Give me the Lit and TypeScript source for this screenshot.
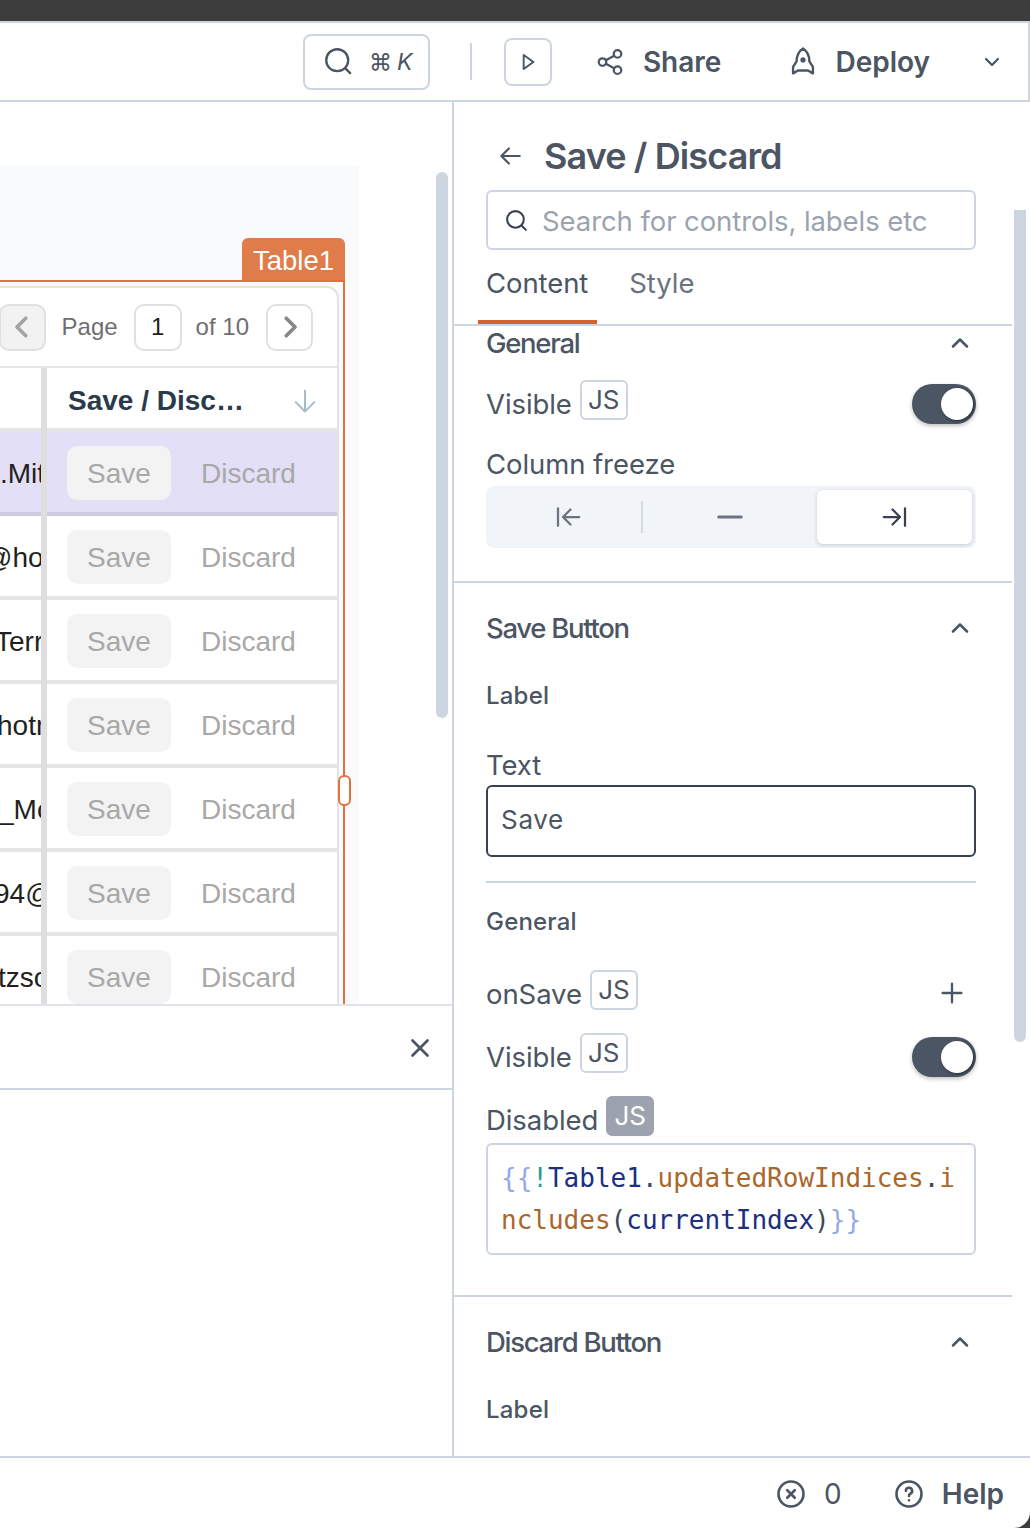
import { LitElement, html, css, svg } from "lit";
import { customElement } from "lit/decorators.js";

const icon = (size: number, body: unknown, sw = 2) => html`<svg
  width=${size}
  height=${size}
  viewBox="0 0 24 24"
  fill="none"
  stroke="currentColor"
  stroke-width=${sw}
  stroke-linecap="round"
  stroke-linejoin="round"
>${body}</svg>`;

// first column is cut by the scroll position, so each row has its own offset
const rows = [
  { text: ".Mitchell", left: 0, on: true },
  { text: "@hotmail", left: -16 },
  { text: "Terry", left: -5 },
  { text: "hotmail", left: -3 },
  { text: "_Morar", left: -2 },
  { text: "94@gmail", left: -6 },
  { text: "tzsche", left: -2 },
];

@customElement("app-root")
export class AppRoot extends LitElement {
  static styles = css`
    :host {
      display: block;
      width: 1030px;
      height: 1528px;
      overflow: hidden;
      background: #3d3d3d;
      font-family: Inter, "Liberation Sans", sans-serif;
      color: #4b5563;
      --line: #cdd5e1;
    }
    .window {
      margin-top: 21px;
      height: 1507px;
      display: flex;
      flex-direction: column;
      background: #fff;
      border-top: 2px solid var(--line);
      border-bottom-right-radius: 16px;
      box-sizing: border-box;
      overflow: hidden;
    }

    /* top bar */
    .top {
      height: 79px;
      flex: none;
      box-sizing: border-box;
      border-bottom: 2px solid var(--line);
      border-right: 2px solid var(--line);
      display: flex;
      align-items: center;
      justify-content: flex-end;
      padding-right: 24px;
    }
    .cmdk {
      width: 127px;
      height: 56px;
      box-sizing: border-box;
      border: 2px solid var(--line);
      border-radius: 8px;
      display: flex;
      align-items: center;
      padding-left: 18px;
      margin-right: 40px;
    }
    .cmdk span {
      font-size: 23px;
      margin-left: 15px;
      white-space: nowrap;
      color: #4b5563;
    }
    .cmdk em {
      margin-left: 5px;
    }
    .vsep {
      width: 2px;
      height: 37px;
      background: var(--line);
      margin-right: 32px;
    }
    .play {
      width: 48px;
      height: 48px;
      box-sizing: border-box;
      border: 2px solid var(--line);
      border-radius: 8px;
      display: flex;
      align-items: center;
      justify-content: center;
      margin-right: 43px;
    }
    .act {
      display: flex;
      align-items: center;
      font-size: 28px;
      font-weight: 600;
      line-height: 34px;
    }
    .act svg {
      margin-right: 15px;
    }
    .share {
      margin-right: 65px;
    }
    .share svg {
      margin-right: 18px;
    }
    .deploy {
      margin-right: 50px;
    }

    /* body */
    .main {
      flex: 1;
      min-height: 0;
      display: flex;
    }
    .left {
      width: 454px;
      flex: none;
      box-sizing: border-box;
      border-right: 2px solid var(--line);
      display: flex;
      flex-direction: column;
    }
    .stage {
      height: 904px;
      flex: none;
      box-sizing: border-box;
      padding-top: 64px;
      border-bottom: 2px solid #e0e4ea;
      position: relative;
      overflow: hidden;
    }
    .scroll {
      position: absolute;
      left: 436px;
      top: 70px;
      width: 12px;
      height: 546px;
      border-radius: 6px;
      background: var(--line);
    }
    .canvas {
      width: 359px;
      height: 100%;
      background: #f9fafb;
      padding-top: 72px;
      box-sizing: border-box;
      display: flex;
      flex-direction: column;
      align-items: flex-end;
    }
    .tag {
      width: 103px;
      height: 42px;
      margin-right: 14px;
      flex: none;
      background: #e07b4a;
      border-radius: 6px 6px 0 0;
      color: #fff;
      font-family: "Liberation Sans", sans-serif;
      font-size: 27.5px;
      line-height: 45px;
      text-align: center;
    }
    .widget {
      width: 345px;
      margin-right: 14px;
      flex: 1;
      box-sizing: border-box;
      border-top: 2px solid #e5703c;
      border-right: 2px solid #e5703c;
      padding: 4px 4px 0 0;
      font-family: "Liberation Sans", sans-serif;
      position: relative;
    }
    .handle {
      position: absolute;
      right: -8px;
      top: 493px;
      width: 13px;
      height: 31px;
      box-sizing: border-box;
      border: 2px solid #e5703c;
      border-radius: 6px;
      background: #fff;
    }
    .table {
      height: 100%;
      box-sizing: border-box;
      background: #fff;
      border-top: 2px solid #e3e3e3;
      border-right: 2px solid #e3e3e3;
      border-top-right-radius: 12px;
      overflow: hidden;
    }
    .pager {
      height: 80px;
      box-sizing: border-box;
      border-bottom: 2px solid #e7e7e7;
      display: flex;
      align-items: center;
      justify-content: flex-end;
      padding-right: 24px;
      font-size: 24px;
      color: #716e6e;
      white-space: nowrap;
    }
    .pg {
      width: 47px;
      height: 47px;
      flex: none;
      box-sizing: border-box;
      border: 2px solid #e0e0e0;
      border-radius: 10px;
      display: flex;
      align-items: center;
      justify-content: center;
      color: #8a8787;
    }
    .pg.prev {
      background: #f2f2f2;
      margin-right: 16px;
      color: #a5a3a3;
    }
    .pg.num {
      width: 48px;
      color: #231f20;
      margin: 0 14px 0 16px;
    }
    .pg.next {
      margin-left: 17px;
    }
    .row {
      display: flex;
      height: 84px;
      box-sizing: border-box;
      border-bottom: 4px solid #e5e5e5;
    }
    .row.on {
      background: #e3dff6;
      border-bottom-color: #cfcbe0;
    }
    .row.head {
      height: 64px;
    }
    .clip {
      width: 41px;
      flex: none;
      overflow: hidden;
      white-space: nowrap;
      font-size: 28px;
      line-height: 84px;
      color: #231f20;
    }
    .colsep {
      width: 6px;
      flex: none;
      margin-bottom: -4px;
      background: #dfdede;
    }
    .cell {
      flex: 1;
      display: flex;
      align-items: flex-start;
      padding: 14px 0 0 20px;
      font-size: 28px;
      color: #a9a8a8;
    }
    .head .cell {
      align-items: center;
      padding: 6px 18px 0 21px;
      justify-content: space-between;
      font-weight: 700;
      color: #2b3a4a;
      font-size: 28px;
    }
    .head .cell svg {
      color: #a9bac9;
    }
    .btn {
      width: 104px;
      height: 54px;
      flex: none;
      border-radius: 10px;
      background: #f3f3f3;
      text-align: center;
      line-height: 55px;
      margin-right: 30px;
    }
    .link {
      line-height: 55px;
    }
    .bar {
      height: 84px;
      flex: none;
      box-sizing: border-box;
      border-bottom: 2px solid var(--line);
      display: flex;
      align-items: center;
      justify-content: flex-end;
      padding-right: 17px;
      padding-top: 2px;
    }

    /* property pane */
    .pane {
      flex: 1;
      min-width: 0;
      position: relative;
      overflow: hidden;
      font-size: 27.5px;
      letter-spacing: -0.08px;
      line-height: 34px;
    }
    .pbar {
      position: absolute;
      left: 560px;
      top: 108px;
      width: 12px;
      height: 832px;
      border-radius: 0 0 6px 6px;
      background: var(--line);
    }
    .title {
      display: flex;
      align-items: center;
      height: 44px;
      margin: 32px 0 12px 43px;
      font-size: 36px;
      font-weight: 600;
      letter-spacing: -0.9px;
    }
    .title svg {
      margin-right: 21px;
    }
    .search {
      height: 60px;
      margin: 0 54px 0 32px;
      box-sizing: border-box;
      border: 2px solid var(--line);
      border-radius: 6px;
      display: flex;
      align-items: center;
      padding: 1px 0 0 16px;
      color: #9ca3af;
    }
    .search svg {
      color: #374151;
      margin-right: 13px;
    }
    .tabs {
      height: 76px;
      margin-right: 18px;
      box-sizing: border-box;
      border-bottom: 2px solid var(--line);
      display: flex;
      padding-left: 24px;
    }
    .tab {
      padding: 16px 9px 0 8px;
      margin-right: 24px;
      height: 74px;
      box-sizing: border-box;
      color: #6b7280;
    }
    .tab.on {
      border-bottom: 4px solid #d4622f;
      color: #4b5563;
    }
    .sec {
      display: flow-root;
      margin: 0 18px 0 0;
      padding: 0 36px 0 32px;
      border-bottom: 2px solid var(--line);
    }
    .sec.last {
      border-bottom: 0;
    }
    .sec-h {
      display: flex;
      align-items: center;
      justify-content: space-between;
      font-weight: 500;
      letter-spacing: -1.3px;
    }
    .sec-h svg {
      margin-right: 2px;
    }
    .sub {
      font-size: 24px;
      font-weight: 500;
      letter-spacing: 0.2px;
    }
    .field {
      display: flex;
      align-items: flex-end;
      justify-content: space-between;
      height: 44px;
    }
    .name {
      display: flex;
      align-items: flex-end;
      margin-bottom: 3px;
    }
    .js {
      width: 48px;
      height: 40px;
      box-sizing: border-box;
      border: 2px solid var(--line);
      border-radius: 6px;
      margin: 0 0 1px 8px;
      font-size: 26px;
      line-height: 36px;
      text-align: center;
      color: #4b5563;
    }
    .js.on {
      background: #9ca3af;
      border-color: #9ca3af;
      color: #fff;
    }
    .plus {
      display: flex;
      margin: 0 10px 7px 0;
    }
    .toggle {
      width: 64px;
      height: 40px;
      border-radius: 20px;
      background: #4b5563;
      box-shadow: 0 2px 4px rgba(0, 0, 0, 0.25);
      display: flex;
      align-items: center;
      justify-content: flex-end;
      padding-right: 3px;
      box-sizing: border-box;
    }
    .toggle i {
      width: 32px;
      height: 32px;
      border-radius: 50%;
      background: #fff;
      box-shadow: 1px 1px 3px rgba(0, 0, 0, 0.5);
    }
    .seg {
      height: 62px;
      margin-top: 5px;
      border-radius: 8px;
      background: #f1f5f9;
      display: flex;
      align-items: center;
      box-sizing: border-box;
    }
    .seg div {
      height: 54px;
      flex: none;
      box-sizing: border-box;
      display: flex;
      align-items: center;
      justify-content: center;
      color: #6b7280;
      position: relative;
    }
    .seg .s1 {
      width: 157px;
      padding-left: 7px;
    }
    .seg .s1::after {
      content: "";
      position: absolute;
      right: 0;
      top: 11px;
      height: 32px;
      width: 2px;
      background: #d5dbe4;
    }
    .seg .s2 {
      width: 174px;
    }
    .seg .s3 {
      width: 155px;
      background: #fff;
      border-radius: 6px;
      color: #374151;
      box-shadow: 0 1px 4px rgba(0, 0, 0, 0.18);
    }
    .input {
      height: 72px;
      margin-top: 3px;
      box-sizing: border-box;
      border: 2px solid #374151;
      border-radius: 6px;
      padding-left: 13px;
      line-height: 66px;
      font-size: 26px;
      letter-spacing: 0.7px;
    }
    .rule {
      height: 2px;
      background: var(--line);
      margin-top: 24px;
    }
    .code {
      height: 112px;
      margin-top: 3px;
      box-sizing: border-box;
      border: 2px solid var(--line);
      border-radius: 6px;
      padding: 12px 12px 0 13px;
      font-family: "DejaVu Sans Mono", "Liberation Mono", monospace;
      font-size: 26px;
      letter-spacing: 0;
      line-height: 42px;
      word-break: break-all;
      color: #3d4a5a;
    }
    .b {
      color: #93a9e8;
    }
    .g {
      color: #2c9a8f;
    }
    .n {
      color: #1c2f80;
    }
    .f {
      color: #a9672c;
    }

    /* footer */
    .foot {
      height: 72px;
      flex: none;
      box-sizing: border-box;
      border-top: 2px solid var(--line);
      display: flex;
      align-items: center;
      justify-content: flex-end;
      padding-right: 26px;
      padding-top: 2px;
    }
    .foot svg {
      margin-right: 18px;
    }
    .count {
      margin-right: 52px;
      font-size: 28px;
    }
    .help {
      font-size: 28px;
      font-weight: 600;
    }
  `;

  private sectionHead(label: string, gap: number) {
    return html`<div class="sec-h" style="margin-top:${gap}px">
      ${label}
      ${icon(28, svg`<path d="M6 15l6-6 6 6" />`, 2.2)}
    </div>`;
  }

  private field(label: string, js = false) {
    return html`<div class="name">
      <span>${label}</span><span class="js ${js ? "on" : ""}">JS</span>
    </div>`;
  }

  render() {
    return html`<div class="window">
      <div class="top">
        <div class="cmdk">
          ${icon(31, svg`<circle cx="11" cy="11" r="8.5" /><path d="M17.5 17.5L21 21" />`, 1.8)}
          <span>⌘<em>K</em></span>
        </div>
        <div class="vsep"></div>
        <div class="play">
          ${icon(26, svg`<path d="M8 5.5l9 6.5-9 6.5z" />`, 1.8)}
        </div>
        <div class="act share">
          ${icon(
            30,
            svg`<circle cx="6" cy="12" r="3" /><circle cx="18" cy="5.5" r="3" /><circle cx="18" cy="18.5" r="3" /><path d="M8.7 10.6l6.6-3.6M8.7 13.4l6.6 3.6" />`,
            1.8,
          )}Share
        </div>
        <div class="act deploy">
          ${icon(
            34,
            svg`<path d="M12 2.500c-3 2-4.500 5-4.500 9L5 15.500V20l3.500-2h7l3.500 2v-4.500l-2.500-4c0-4-1.500-7-4.500-9z" /><circle cx="12" cy="10.500" r="1" />`,
            1.7,
          )}Deploy
        </div>
        ${icon(24, svg`<path d="M6 9l6 6 6-6" />`, 2.2)}
      </div>

      <div class="main">
        <div class="left">
          <div class="stage">
            <div class="canvas">
              <div class="tag">Table1</div>
              <div class="widget">
                <div class="handle"></div>
                <div class="table">
                  <div class="pager">
                    <div class="pg prev">${icon(30, svg`<path d="M15 5l-7 7 7 7" />`, 3)}</div>
                    <span>Page</span>
                    <div class="pg num">1</div>
                    <span>of 10</span>
                    <div class="pg next">${icon(30, svg`<path d="M9 5l7 7-7 7" />`, 3)}</div>
                  </div>
                  <div class="row head">
                    <div class="clip"></div>
                    <div class="colsep"></div>
                    <div class="cell">
                      <span>Save / Disc…</span>
                      ${icon(28, svg`<path d="M12 3v18M4 13l8 8 8-8" />`, 1.7)}
                    </div>
                  </div>
                  ${rows.map(
                    (r) => html`<div class="row ${r.on ? "on" : ""}">
                      <div class="clip"><span style="margin-left:${r.left}px">${r.text}</span></div>
                      <div class="colsep"></div>
                      <div class="cell">
                        <div class="btn">Save</div>
                        <div class="link">Discard</div>
                      </div>
                    </div>`,
                  )}
                </div>
              </div>
            </div>
            <div class="scroll"></div>
          </div>
          <div class="bar">${icon(30, svg`<path d="M6 6l12 12M18 6L6 18" />`, 2.2)}</div>
        </div>

        <div class="pane">
          <div class="title">
            ${icon(26, svg`<path d="M21 12H4M11 5l-7 7 7 7" />`, 2)}Save / Discard
          </div>
          <div class="search">
            ${icon(25, svg`<circle cx="11" cy="11" r="8" /><path d="M17 17l4 4" />`, 2)}Search for controls, labels etc
          </div>
          <div class="tabs">
            <div class="tab on">Content</div>
            <div class="tab">Style</div>
          </div>

          <div class="sec" style="height:255px">
            ${this.sectionHead("General", 0)}
            <div class="field" style="margin-top:20px">
              ${this.field("Visible")}
              <div class="toggle"><i></i></div>
            </div>
            <div style="margin-top:23px">Column freeze</div>
            <div class="seg">
              <div class="s1">${icon(30, svg`<path d="M4 5v14M21 12H8M14 6l-6 6 6 6" />`, 1.8)}</div>
              <div class="s2">${icon(30, svg`<path d="M3 12h18" />`, 2.4)}</div>
              <div class="s3">${icon(30, svg`<path d="M20 5v14M3 12h13M10 6l6 6-6 6" />`, 1.8)}</div>
            </div>
          </div>

          <div class="sec" style="height:712px">
            ${this.sectionHead("Save Button", 28)}
            <div class="sub" style="margin-top:34px">Label</div>
            <div style="margin-top:35px">Text</div>
            <div class="input">Save</div>
            <div class="rule"></div>
            <div class="sub" style="margin-top:22px">General</div>
            <div class="field" style="margin-top:31px">
              ${this.field("onSave")}
              <span class="plus">${icon(28, svg`<path d="M12 4v16M4 12h16" />`, 2)}</span>
            </div>
            <div class="field" style="margin-top:19px">
              ${this.field("Visible")}
              <div class="toggle"><i></i></div>
            </div>
            <div class="field" style="margin-top:19px">${this.field("Disabled", true)}</div>
            <div class="code"><span class="b">{{</span><span class="g">!</span><span class="n">Table1</span>.<span class="f">updatedRowIndices</span>.<span class="f">includes</span>(<span class="n">currentIndex</span>)<span class="b">}}</span></div>
          </div>

          <div class="sec last">
            ${this.sectionHead("Discard Button", 28)}
            <div class="sub" style="margin-top:34px">Label</div>
          </div>
          <div class="pbar"></div>
        </div>
      </div>

      <div class="foot">
        ${icon(30, svg`<circle cx="12" cy="12" r="10" /><path d="M9 9l6 6M15 9l-6 6" />`, 2.1)}
        <span class="count">0</span>
        ${icon(30, svg`<circle cx="12" cy="12" r="10" /><path d="M9.500 9.500a2.500 2.500 0 1 1 3.500 2.300c-.7.300-1 .8-1 1.700M12 17h.01" />`, 2.1)}
        <span class="help">Help</span>
      </div>
    </div>`;
  }
}
